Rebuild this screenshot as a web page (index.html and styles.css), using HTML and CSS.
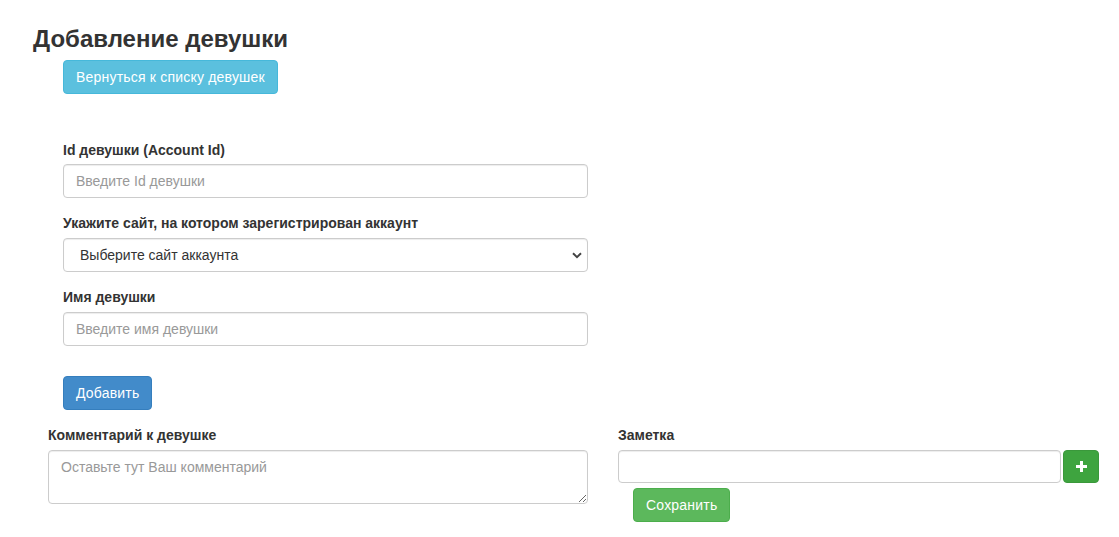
FILE: index.html
```html
<!DOCTYPE html>
<html lang="ru">
<head>
<meta charset="utf-8">
<title>Добавление девушки</title>
<link rel="stylesheet" href="styles.css">
</head>
<body>
<div class="page">
  <h3 class="title">Добавление девушки</h3>
  <div class="indent">
    <button class="btn btn-info" type="button">Вернуться к списку девушек</button>
  </div>

  <form class="indent form">
    <div class="form-group">
      <label class="label">Id девушки (Account Id)</label>
      <input class="control" type="text" placeholder="Введите Id девушки">
    </div>
    <div class="form-group">
      <label class="label">Укажите сайт, на котором зарегистрирован аккаунт</label>
      <select class="control select">
        <option>Выберите сайт аккаунта</option>
      </select>
    </div>
    <div class="form-group">
      <label class="label">Имя девушки</label>
      <input class="control" type="text" placeholder="Введите имя девушки">
    </div>
    <button class="btn btn-primary submit" type="button">Добавить</button>
  </form>

  <div class="bottom-row">
    <div class="col-comment">
      <label class="label">Комментарий к девушке</label>
      <textarea class="control textarea" placeholder="Оставьте тут Ваш комментарий"></textarea>
    </div>
    <div class="col-note">
      <label class="label">Заметка</label>
      <div class="input-group">
        <input class="control note-input" type="text">
        <button class="btn btn-add" type="button" aria-label="Добавить">
          <svg width="11" height="11" viewBox="0 0 11 11"><path d="M4 0h3v4h4v3H7v4H4V7H0V4h4z" fill="#fff"/></svg>
        </button>
      </div>
      <button class="btn btn-success save" type="button">Сохранить</button>
    </div>
  </div>
</div>
</body>
</html>
```

FILE: styles.css
```css
* { box-sizing: border-box; }
body {
  margin: 0;
  font-family: "Liberation Sans", Arial, sans-serif;
  font-size: 14px;
  line-height: 20px;
  color: #333;
  background: #fff;
}
.page {
  padding-left: 33px;
}
.title {
  margin: 25px 0 8px;
  font-size: 24px;
  line-height: 27px;
  font-weight: 700;
  color: #333;
}
.indent {
  padding-left: 30px;
}
.btn {
  display: inline-block;
  height: 34px;
  padding: 6px 12px;
  font-family: inherit;
  font-size: 14px;
  line-height: 20px;
  letter-spacing: 0.2px;
  border: 1px solid transparent;
  border-radius: 4px;
  color: #fff;
  cursor: pointer;
}
.btn-info {
  background: #5bc0de;
  border-color: #46b8da;
}
.btn-primary {
  background: #428bca;
  border-color: #357ebd;
}
.btn-success {
  background: #5cb85c;
  border-color: #4cae4c;
}
.form {
  width: 555px;
  margin-top: 46px;
}
.form-group {
  margin-bottom: 15px;
}
.form-group:first-child .control {
  margin-top: -1px;
}
.label {
  display: block;
  font-weight: 700;
  margin-bottom: 5px;
  color: #333;
}
.control {
  display: block;
  width: 100%;
  height: 34px;
  padding: 6px 12px;
  font-family: inherit;
  font-size: 14px;
  line-height: 20px;
  color: #555;
  background: #fff;
  border: 1px solid #ccc;
  border-radius: 4px;
  box-shadow: inset 0 1px 1px rgba(0,0,0,0.075);
}
.control::placeholder {
  color: #999;
}
.select {
  appearance: none;
  -webkit-appearance: none;
  padding-left: 16px;
  color: #333;
  background-image: url("data:image/svg+xml;utf8,<svg xmlns='http://www.w3.org/2000/svg' width='10' height='7' viewBox='0 0 10 7'><path d='M1 1.2l4 4 4-4' fill='none' stroke='%23444' stroke-width='2'/></svg>");
  background-repeat: no-repeat;
  background-position: right 5px center;
}
.submit {
  margin-top: 15px;
}
.bottom-row {
  display: flex;
  gap: 30px;
  padding-left: 15px;
  margin-top: 15px;
}
.col-comment {
  width: 540px;
}
.textarea {
  height: 54px;
  resize: vertical;
}
.col-note {
  width: 481px;
}
.input-group {
  display: flex;
  gap: 2px;
}
.note-input {
  flex: 1;
  height: 33px;
}
.btn-add {
  width: 36px;
  height: 33px;
  padding: 0;
  display: flex;
  align-items: center;
  justify-content: center;
  background: #3ea43f;
  border-color: #3a983b;
}
.save {
  margin-top: 5px;
  margin-left: 15px;
}
```
